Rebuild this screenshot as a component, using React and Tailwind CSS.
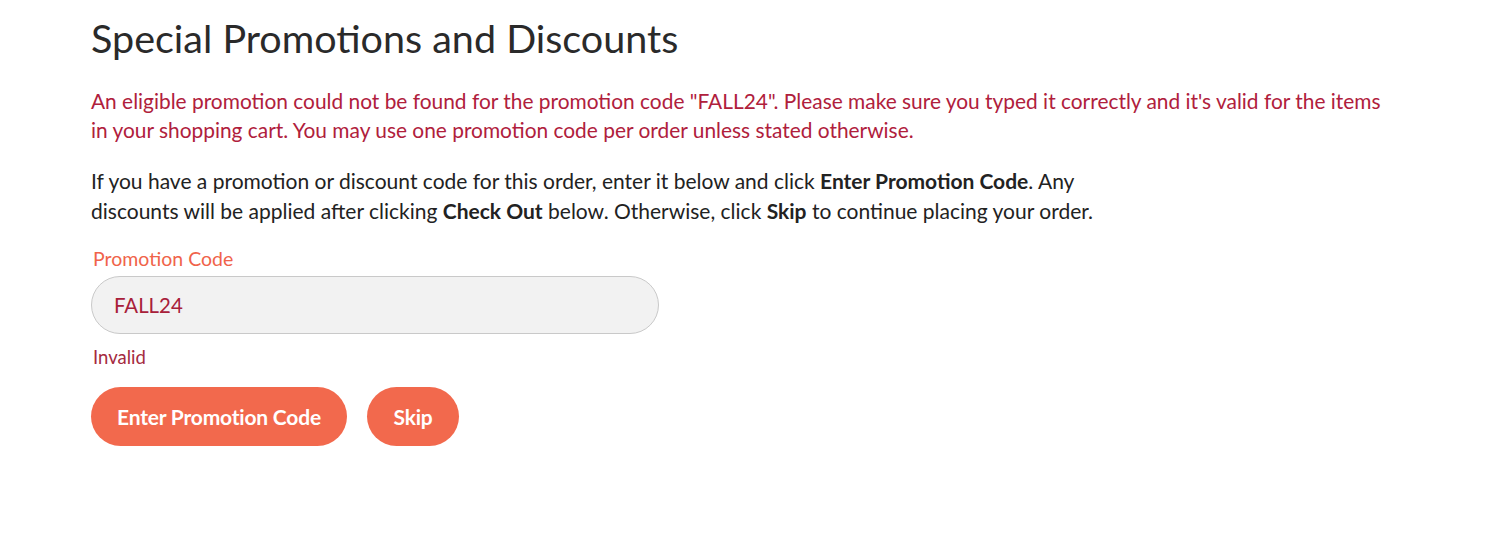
export default function App() {
  return (
    <div className="min-h-[534px] bg-white pl-[91px] pr-4 pt-[13px] font-['Lato','Liberation_Sans',sans-serif] text-[#222]">
      <h1 className="text-[39.5px] leading-[50px] font-normal text-[#2a2a2a]">Special Promotions and Discounts</h1>
      <p className="mt-[23px] max-w-[1300px] text-[20.9px] leading-[29px] text-[#b0203c]">
        An eligible promotion could not be found for the promotion code "FALL24". Please make sure you typed it correctly and it's valid for the items in your shopping cart. You may use one promotion code per order unless stated otherwise.
      </p>
      <p className="mt-[22px] max-w-[1040px] text-[21px] leading-[30px] text-[#222]">
        If you have a promotion or discount code for this order, enter it below and click <b>Enter Promotion Code</b>. Any discounts will be applied after clicking <b>Check Out</b> below. Otherwise, click <b>Skip</b> to continue placing your order.
      </p>
      <div className="mt-[23px] w-[568px]">
        <label className="block pl-[2px] text-[19.5px] leading-[20px] text-[#f0634a]">Promotion Code</label>
        <input
          defaultValue="FALL24"
          className="mt-[7px] h-[58px] w-full rounded-full border border-[#c9c9c9] bg-[#f2f2f2] px-[22px] text-[20.4px] text-[#a8203a] outline-none"
        />
        <div className="mt-[13px] pl-[2px] text-[18.5px] leading-[20px] text-[#a52a3f]">Invalid</div>
      </div>
      <div className="mt-[20px] flex gap-5">
        <button className="h-[59px] w-[256px] rounded-full bg-[#f2694d] text-[21px] font-bold tracking-[-0.2px] text-white">Enter Promotion Code</button>
        <button className="h-[59px] w-[92px] rounded-full bg-[#f2694d] text-[21px] font-bold tracking-[-0.2px] text-white">Skip</button>
      </div>
    </div>
  );
}
